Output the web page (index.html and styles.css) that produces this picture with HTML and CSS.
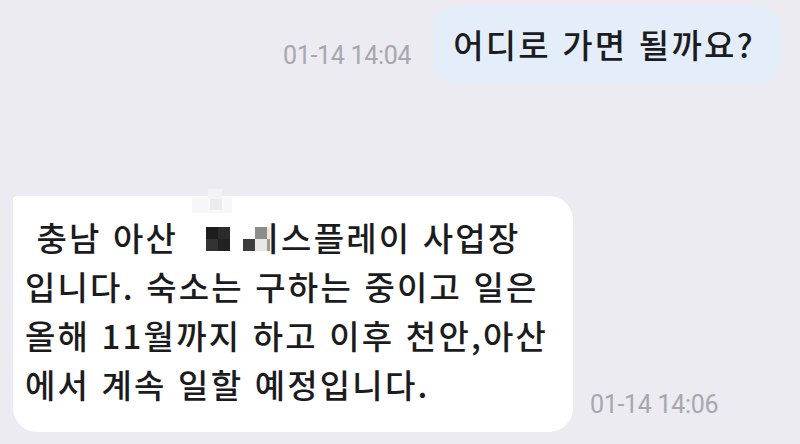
FILE: index.html
```html
<!DOCTYPE html>
<html lang="ko">
<head>
<meta charset="utf-8">
<link rel="stylesheet" href="styles.css">
</head>
<body>
<div class="chat">
  <div class="row row-out">
    <span class="time">01-14 14:04</span>
    <div class="bubble bubble-out">어디로 가면 될까요?</div>
  </div>
  <div class="row row-in">
    <div class="bubble bubble-in">
      <span class="line">&nbsp;충남 아산 <span class="redact"><svg class="pix" width="80" height="60" viewBox="0 0 80 60">
        <rect x="-14" y="2" width="40" height="16" fill="#f7f7f9"/>
        <rect x="2" y="-6" width="14" height="10" fill="#f3f3f6"/>
        <rect x="4" y="4" width="12" height="11" fill="#ececf0"/>
        <rect x="0" y="32" width="12" height="12" fill="#1d1d1d"/>
        <rect x="12" y="32" width="12" height="12" fill="#2b2b2b"/>
        <rect x="0" y="44" width="12" height="12" fill="#333"/>
        <rect x="12" y="44" width="12" height="12" fill="#222"/>
        <rect x="37" y="28" width="27" height="30" fill="#fff"/>
        <rect x="49" y="32" width="12" height="12" fill="#8c8c8c"/>
        <rect x="61" y="32" width="3" height="12" fill="#e6e6e6"/>
        <rect x="37" y="44" width="12" height="12" fill="#3d3d3d"/>
        <rect x="49" y="44" width="12" height="12" fill="#e8e8e8"/>
        <rect x="61" y="44" width="3" height="12" fill="#9a9a9a"/>
      </svg></span>디스플레이 사업장</span>
      <span class="line">입니다. 숙소는 구하는 중이고 일은</span>
      <span class="line">올해 11월까지 하고 이후 천안,아산</span>
      <span class="line">에서 계속 일할 예정입니다.</span>
    </div>
    <span class="time time-in">01-14 14:06</span>
  </div>
</div>
</body>
</html>
```

FILE: styles.css
```css
html, body {
  margin: 0;
  padding: 0;
}
body {
  width: 800px;
  height: 444px;
  overflow: hidden;
  background: #ebebf1;
  font-family: "Noto Sans CJK KR", "Noto Sans", sans-serif;
  color: #1c1c1e;
}
.chat {
  display: flex;
  flex-direction: column;
  gap: 112px;
}
.row {
  display: flex;
  align-items: flex-end;
}
.row-out {
  justify-content: flex-end;
  padding-top: 7px;
  padding-right: 19px;
  gap: 23px;
}
.row-in {
  padding-left: 13px;
  gap: 17px;
}
.bubble {
  font-size: 33px;
  font-weight: 500;
  letter-spacing: 2.2px;
  line-height: 49px;
}
.bubble-out {
  background: #e3eefa;
  border-radius: 22px;
  height: 77px;
  box-sizing: border-box;
  padding: 13px 26px 0 19px;
}
.bubble-in {
  background: #ffffff;
  border-radius: 4px 24px 24px 24px;
  width: 560px;
  box-sizing: border-box;
  padding: 17px 6px 23px 12px;
  display: flex;
  flex-direction: column;
}
.line {
  white-space: nowrap;
}
.redact {
  display: inline-block;
  position: relative;
  width: 59px;
  height: 10px;
}
.pix {
  position: absolute;
  left: 16px;
  top: -46px;
  overflow: visible;
}
.time {
  font-family: Roboto, "Noto Sans", sans-serif;
  font-size: 25px;
  color: #a7a7ad;
  letter-spacing: -0.3px;
  margin-bottom: 14px;
}
.time-in {
  margin-bottom: 13px;
}
```
